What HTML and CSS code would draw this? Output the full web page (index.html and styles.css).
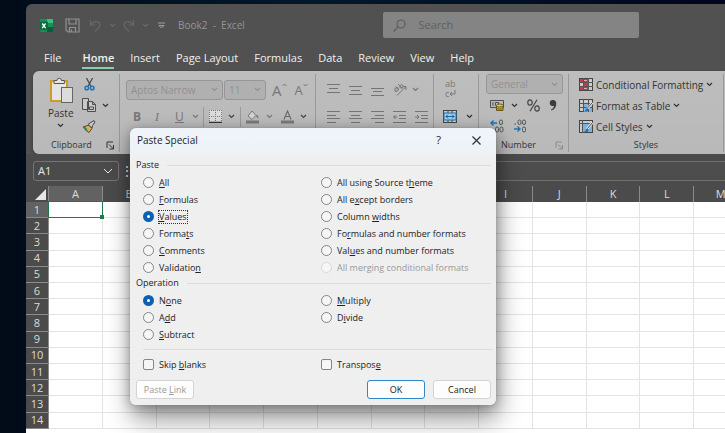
FILE: index.html
```html
<!DOCTYPE html>
<html lang="en">
<head>
<meta charset="utf-8">
<title>Book2 - Excel</title>
<link rel="stylesheet" href="styles.css">
</head>
<body>
<svg class="defs" aria-hidden="true">
  <symbol id="chev" viewBox="0 0 7 5"><path d="M1 1l2.500 2.500L6 1" fill="none" stroke="currentColor" stroke-width="1.200"/></symbol>
  <symbol id="launch" viewBox="0 0 9 9"><path d="M1 7V1h6M3 3.500l4 4M7.500 4v4h-4" fill="none" stroke="currentColor"/></symbol>
</svg>
<div class="window">
  <header class="titlebar">
    <svg class="logo" viewBox="0 0 13 13"><rect width="13" height="13" rx="1" fill="#159057"/><path d="M7 0h5a1 1 0 0 1 1 1v3H7z" fill="#3dbf82"/><path d="M7 8h6v4a1 1 0 0 1-1 1H7z" fill="#0c5a36"/><rect y="2.500" width="8" height="8.500" rx="1" fill="#0e6b3d"/><path d="M2.200 4.500l3.400 4.700M5.600 4.500L2.200 9.200" stroke="#fff" stroke-width="1.300"/></svg>
    <button class="qat" aria-label="Save"><svg width="15" height="15" viewBox="0 0 15 15" fill="none" stroke="#929292" stroke-width="1.200"><path d="M1 1h13v13H3L1 12zM4 1v5h7V1M4.500 14V9.500h6V14M6.500 11.500V14"/></svg></button>
    <button class="qat dim" aria-label="Undo"><svg width="13" height="13" viewBox="0 0 13 13" fill="none" stroke="#686868" stroke-width="1.200"><path d="M1.500 1v5h5M2 5.500C5 1 11 2 11 6c0 2-2 3.500-5 6.500"/></svg><svg class="chev"><use href="#chev"/></svg></button>
    <button class="qat dim" aria-label="Redo"><svg width="13" height="13" viewBox="0 0 13 13" fill="none" stroke="#686868" stroke-width="1.200"><path d="M11.500 1v5h-5M11 5.500C8 1 2 2 2 6c0 2 2 3.500 5 6.500"/></svg><svg class="chev"><use href="#chev"/></svg></button>
    <button class="qat more" aria-label="Customize toolbar"><svg width="7" height="7" viewBox="0 0 7 7" fill="none" stroke="#a0a0a0"><path d="M0 1h7M1 3.500h5L3.500 6z"/></svg></button>
    <span class="doc">Book2&nbsp; -&nbsp; Excel</span>
    <label class="search"><svg width="13" height="13" viewBox="0 0 13 13" fill="none" stroke="#5e5e5e" stroke-width="1.200"><circle cx="8" cy="5" r="4"/><path d="M5 8l-4.500 4.500"/></svg><input type="text" placeholder="Search" aria-label="Search"></label>
  </header>
  <nav class="tabs">
    <a href="#">File</a><a href="#" class="on">Home</a><a href="#">Insert</a><a href="#">Page Layout</a><a href="#">Formulas</a><a href="#">Data</a><a href="#">Review</a><a href="#">View</a><a href="#">Help</a>
  </nav>
  <section class="ribbon">
    <div class="group clipboard">
      <div class="body">
        <button class="paste"><svg width="24" height="27" viewBox="0 0 24 27"><rect x="2" y="4" width="16" height="20" fill="#e4e4e4" stroke="#d09a2a" stroke-width="2"/><path d="M5 6.500V3.500h3a2.200 2.200 0 0 1 4.400 0h3v3z" fill="#e6e6e6" stroke="#555"/><rect x="12.500" y="10.500" width="11" height="15" fill="#dcdcdc" stroke="#666"/></svg><span>Paste</span><svg class="chev"><use href="#chev"/></svg></button>
        <div class="stack">
          <button aria-label="Cut"><svg width="11" height="14" viewBox="0 0 11 14" fill="none"><path d="M2.500 1l4.500 8.500M8.500 1L4 9.500" stroke="#444" stroke-width="1.200"/><circle cx="2.800" cy="11" r="1.800" stroke="#2273b5" stroke-width="1.500"/><circle cx="8.200" cy="11" r="1.800" stroke="#2273b5" stroke-width="1.500"/></svg></button>
          <button aria-label="Copy"><svg width="14" height="14" viewBox="0 0 14 14" fill="#c9c9c9" stroke="#4e4e4e"><path d="M.500 .500h6v11h-6zM5.500 3.500h5l3 3v7h-8zM10.500 3.500v3h3M7.500 9h4v2.500h-4z"/></svg><svg class="chev"><use href="#chev"/></svg></button>
          <button aria-label="Format Painter"><svg width="14" height="13" viewBox="0 0 14 13"><path d="M1 7l6-2 3 3.500L7 12.500 4.500 11z" fill="#d9b346" stroke="#4c4c4c"/><path d="M1 7l3 1 1.500 3.500" fill="#3c874d" stroke="#3c874d"/><path d="M6 4.500l2-1.500 4-2.500 1 1.500-2.500 3.500L10 8z" fill="#c9c9c9" stroke="#444"/></svg></button>
        </div>
      </div>
      <div class="caption">Clipboard<svg class="launch"><use href="#launch"/></svg></div>
    </div>
    <div class="group font">
      <div class="line one">
        <button class="combo name" disabled>Aptos Narrow<svg class="chev"><use href="#chev"/></svg></button>
        <button class="combo size" disabled>11<svg class="chev"><use href="#chev"/></svg></button>
        <button class="grow" aria-label="Increase font size">A<svg width="5" height="4" viewBox="0 0 5 4"><path d="M.500 3l2-2 2 2" fill="none" stroke="currentColor"/></svg></button>
        <button class="grow small" aria-label="Decrease font size">A<svg width="5" height="4" viewBox="0 0 5 4"><path d="M.500 1l2 2 2-2" fill="none" stroke="currentColor"/></svg></button>
      </div>
      <div class="line two">
        <button class="bold">B</button><button class="ital">I</button><button class="under">U<svg class="chev"><use href="#chev"/></svg></button>
        <button class="ruled dark" aria-label="Borders"><svg width="13" height="13" viewBox="0 0 13 13"><rect width="13" height="13" fill="#dcdcdc"/><path d="M.500 0v12M12.500 0v12M6.500 0v12M0 .500h13M0 6.500h13" stroke="#777" stroke-dasharray="1 1"/><path d="M0 12.500h13" stroke="#333" stroke-width="1.400"/></svg><svg class="chev"><use href="#chev"/></svg></button>
        <button class="ruled" aria-label="Fill color"><svg width="14" height="14" viewBox="0 0 14 14"><path d="M6 1l4 4.500-4 4-4-3.500z" fill="#d3d3d3" stroke="#777"/><path d="M10.500 5l1.500 3" stroke="#777" stroke-width="1.500"/><path d="M0 12h13" stroke="#7a7a7a" stroke-width="3"/></svg><svg class="chev"><use href="#chev"/></svg></button>
        <button class="color" aria-label="Font color"><svg width="14" height="14" viewBox="0 0 14 14"><path d="M3 9.500L6.500 1 10 9.500M4.200 6.500h4.600" fill="none" stroke="#6b6b6b" stroke-width="1.200"/><path d="M0 12h13" stroke="#7a7a7a" stroke-width="3"/></svg><svg class="chev"><use href="#chev"/></svg></button>
      </div>
    </div>
    <div class="group align">
      <div class="left">
        <div class="line one">
          <svg class="bars" viewBox="0 0 13 13"><path d="M0 1.500h13M2 5.500h9M0 9.500h13"/></svg>
          <svg class="bars" viewBox="0 0 13 13"><path d="M0 3.500h13M2 7.500h9M0 11.500h13"/></svg>
          <svg class="bars" viewBox="0 0 13 13"><path d="M0 5.500h13M2 8.500h9M0 12.500h13"/></svg>
          <button class="orient" aria-label="Orientation"><svg width="15" height="14" viewBox="0 0 15 14" fill="none" stroke="#777"><ellipse cx="3.500" cy="6.500" rx="2" ry="1.500" transform="rotate(-45 3.500 6.500)"/><path d="M2.500 3.500l3.500 3.500M5 1l4 4"/><circle cx="8.500" cy="3.500" r="1.700"/><path d="M4 12.500l8.500-8.500M9.500 3.500h3.500V7"/></svg><svg class="chev"><use href="#chev"/></svg></button>
        </div>
        <div class="line two">
          <svg class="bars" viewBox="0 0 13 13"><path d="M0 1.500h13M0 5.500h9M0 8.500h13M0 12.500h9"/></svg>
          <svg class="bars" viewBox="0 0 13 13"><path d="M0 1.500h13M2 5.500h9M0 8.500h13M2 12.500h9"/></svg>
          <svg class="bars" viewBox="0 0 13 13"><path d="M0 1.500h13M4 5.500h9M0 8.500h13M4 12.500h9"/></svg>
          <svg class="bars" viewBox="0 0 13 13"><path d="M0 1.500h13M6 5.500h7M6 8.500h7M0 12.500h13M4.500 7h-4M2.500 5L.500 7l2 2"/></svg>
          <svg class="bars" viewBox="0 0 13 13"><path d="M0 1.500h13M6 5.500h7M6 8.500h7M0 12.500h13M0 7h4M2 5l2 2-2 2"/></svg>
        </div>
      </div>
      <div class="wrap">
        <button class="wraptext" aria-label="Wrap Text"><span>ab</span><span>c<svg width="7" height="8" viewBox="0 0 7 8"><path d="M6 1v4H1M3 3L1 5l2 2" fill="none" stroke="currentColor"/></svg></span></button>
        <button class="merge" aria-label="Merge and Center"><svg width="14" height="13" viewBox="0 0 14 13"><rect x=".500" y=".500" width="13" height="12" fill="#ccc" stroke="#444"/><path d="M5 0v3M9 0v3M5 10v3M9 10v3" stroke="#444"/><rect x="1" y="3" width="12" height="7" fill="#a9cde8" stroke="#1d6fae"/><path d="M3 6.500h8M5 4.500l-2 2 2 2M9 4.500l2 2-2 2" fill="none" stroke="#135f9b"/></svg><svg class="chev"><use href="#chev"/></svg></button>
      </div>
    </div>
    <div class="group number">
      <div class="body">
        <button class="combo" disabled>General<svg class="chev"><use href="#chev"/></svg></button>
        <div class="row"><button aria-label="Accounting format"><svg width="15" height="13" viewBox="0 0 15 13"><path d="M.500 1.500h13v7H.500zM3 3v4M5.500 3.500h3v3h-3z" fill="none" stroke="#4d4d4d"/><path d="M6.500 6.500h6.500v5H6.500z" fill="#d4b42f" stroke="#65581a"/><ellipse cx="9.800" cy="6.500" rx="3.300" ry="1.500" fill="#e3cb5c" stroke="#65581a"/><path d="M6.500 9c1 1.500 5.500 1.500 6.500 0" fill="none" stroke="#65581a"/></svg><svg class="chev"><use href="#chev"/></svg></button><button aria-label="Percent style"><svg width="13" height="13" viewBox="0 0 13 13" fill="none" stroke="#454545" stroke-width="1.200"><ellipse cx="3" cy="3.500" rx="2.200" ry="2.700"/><ellipse cx="10" cy="9.500" rx="2.200" ry="2.700"/><path d="M10 .800L3 12.200"/></svg></button><button aria-label="Comma style"><svg width="8" height="12" viewBox="0 0 8 12"><path d="M4 1a3 3 0 0 0-.500 6c.500 0 1 0 1.500-.300C5 8.500 3.500 10 2 10.500l.500 1C5.500 10.500 7.300 8 7.300 4.500 7.300 2.500 6 1 4 1z" fill="#3c3c3c"/></svg></button></div>
        <div class="row dec"><button aria-label="Increase decimal"><svg width="14" height="14" viewBox="0 0 14 14" fill="none" stroke="#555"><path d="M1 4h6M3.500 1.500L1 4l2.500 2.500" stroke="#1d74b5" stroke-width="1.400"/><rect x="9.500" y="1" width="3" height="4.500" rx="1.500"/><rect x="5.500" y="8" width="3" height="5" rx="1.500"/><rect x="10" y="8" width="3" height="5" rx="1.500"/></svg></button><button aria-label="Decrease decimal"><svg width="14" height="14" viewBox="0 0 14 14" fill="none" stroke="#555"><path d="M1 10h6M4.500 7.500L7 10l-2.500 2.500" stroke="#1d74b5" stroke-width="1.400"/><rect x="5" y="1" width="3" height="4.500" rx="1.500"/><rect x="9.500" y="1" width="3" height="4.500" rx="1.500"/><rect x="9.500" y="8" width="3" height="5" rx="1.500"/><path d="M1.500 5h1.500"/></svg></button></div>
      </div>
      <div class="caption">Number<svg class="launch dim"><use href="#launch"/></svg></div>
    </div>
    <div class="group styles">
      <div class="body">
        <button><svg class="ico" viewBox="0 0 14 13"><rect x=".500" y=".500" width="13" height="12" fill="#ccc" stroke="#444"/><path d="M1 1h8v3H1zM5 5h5v3H5zM1 9h8v3H1z" fill="#c03c4b"/><path d="M0 4.500h14M0 8.500h14M4.500 0v13M9.500 0v13" stroke="#555"/><path d="M5 2.500h3M5 10.500h3" stroke="#e9a3aa"/></svg>Conditional Formatting<svg class="chev"><use href="#chev"/></svg></button>
        <button><svg class="ico" viewBox="0 0 14 13"><rect x=".500" y=".500" width="13" height="12" fill="#ccc" stroke="#444"/><path d="M5 5h8v8H5z" fill="#7db2dc"/><path d="M0 4.500h14M0 8.500h14M4.500 0v13M9.500 0v13" stroke="#555"/><path d="M13.500 3.500L8 10" stroke="#eee" stroke-width="2.500"/><path d="M13.500 3.500L8.500 9" stroke="#444"/><path d="M8.500 9c-2 0-1 2.500-3.500 3.500 3 .500 5-.500 4.500-2.500z" fill="#1d74b5"/></svg>Format as Table<svg class="chev"><use href="#chev"/></svg></button>
        <button><svg class="ico" viewBox="0 0 14 13"><rect x=".500" y=".500" width="13" height="12" fill="#ccc" stroke="#444"/><path d="M3 3h10v9H3z" fill="#7db2dc"/><path d="M0 3.500h14M3.500 0v13" stroke="#555"/><path d="M13.500 2.500L8 9" stroke="#eee" stroke-width="2.500"/><path d="M13.500 2.500L8.500 8.500" stroke="#444"/><path d="M8.500 8.500c-2 0-1 2.500-3.500 3.500 3 .500 5-.500 4.500-2.500z" fill="#1d74b5"/></svg>Cell Styles<svg class="chev"><use href="#chev"/></svg></button>
      </div>
      <div class="caption">Styles</div>
    </div>
  </section>
  <div class="formula">
    <button class="namebox">A1<svg width="10" height="6" viewBox="0 0 10 6"><path d="M1 1l4 4 4-4" fill="none" stroke="currentColor"/></svg></button>
    <span class="grip">⋮</span>
    <input type="text" aria-label="Formula bar">
  </div>
  <main class="sheet">
    <table>
      <thead><tr><th class="corner"><svg width="11" height="11" viewBox="0 0 11 11"><path d="M11 0v11H0z" fill="#e6e6e6"/></svg></th><th class="sel">A</th><th>B</th><th></th><th></th><th></th><th></th><th></th><th></th><th>I</th><th>J</th><th>K</th><th>L</th><th>M</th></tr></thead>
      <tbody>
        <tr><th class="sel">1</th><td class="active"></td><td></td><td></td><td></td><td></td><td></td><td></td><td></td><td></td><td></td><td></td><td></td><td></td></tr>
        <tr><th>2</th><td></td><td></td><td></td><td></td><td></td><td></td><td></td><td></td><td></td><td></td><td></td><td></td><td></td></tr>
        <tr><th>3</th><td></td><td></td><td></td><td></td><td></td><td></td><td></td><td></td><td></td><td></td><td></td><td></td><td></td></tr>
        <tr><th>4</th><td></td><td></td><td></td><td></td><td></td><td></td><td></td><td></td><td></td><td></td><td></td><td></td><td></td></tr>
        <tr><th>5</th><td></td><td></td><td></td><td></td><td></td><td></td><td></td><td></td><td></td><td></td><td></td><td></td><td></td></tr>
        <tr><th>6</th><td></td><td></td><td></td><td></td><td></td><td></td><td></td><td></td><td></td><td></td><td></td><td></td><td></td></tr>
        <tr><th>7</th><td></td><td></td><td></td><td></td><td></td><td></td><td></td><td></td><td></td><td></td><td></td><td></td><td></td></tr>
        <tr><th>8</th><td></td><td></td><td></td><td></td><td></td><td></td><td></td><td></td><td></td><td></td><td></td><td></td><td></td></tr>
        <tr><th>9</th><td></td><td></td><td></td><td></td><td></td><td></td><td></td><td></td><td></td><td></td><td></td><td></td><td></td></tr>
        <tr><th>10</th><td></td><td></td><td></td><td></td><td></td><td></td><td></td><td></td><td></td><td></td><td></td><td></td><td></td></tr>
        <tr><th>11</th><td></td><td></td><td></td><td></td><td></td><td></td><td></td><td></td><td></td><td></td><td></td><td></td><td></td></tr>
        <tr><th>12</th><td></td><td></td><td></td><td></td><td></td><td></td><td></td><td></td><td></td><td></td><td></td><td></td><td></td></tr>
        <tr><th>13</th><td></td><td></td><td></td><td></td><td></td><td></td><td></td><td></td><td></td><td></td><td></td><td></td><td></td></tr>
        <tr><th>14</th><td></td><td></td><td></td><td></td><td></td><td></td><td></td><td></td><td></td><td></td><td></td><td></td><td></td></tr>
      </tbody>
    </table>
  </main>
</div>

<form class="dialog" role="dialog" aria-label="Paste Special">
  <div class="dhead"><span>Paste Special</span><button type="button" class="help" aria-label="Help">?</button><button type="button" class="close" aria-label="Close"><svg width="9" height="9" viewBox="0 0 9 9"><path d="M.500 .500l8 8M8.500 .500l-8 8" stroke="#333" stroke-width="1.200"/></svg></button></div>
  <fieldset>
    <legend>Paste</legend>
    <div class="opts six">
      <label><input type="radio" name="p"><span><u>A</u>ll</span></label>
      <label><input type="radio" name="p"><span><u>F</u>ormulas</span></label>
      <label><input type="radio" name="p" checked><span class="focus"><u>V</u>alues</span></label>
      <label><input type="radio" name="p"><span>Forma<u>t</u>s</span></label>
      <label><input type="radio" name="p"><span><u>C</u>omments</span></label>
      <label><input type="radio" name="p"><span>Validatio<u>n</u></span></label>
      <label><input type="radio" name="p"><span>All using Source t<u>h</u>eme</span></label>
      <label><input type="radio" name="p"><span>All e<u>x</u>cept borders</span></label>
      <label><input type="radio" name="p"><span>Column <u>w</u>idths</span></label>
      <label><input type="radio" name="p"><span>Fo<u>r</u>mulas and number formats</span></label>
      <label><input type="radio" name="p"><span>Val<u>u</u>es and number formats</span></label>
      <label class="off"><input type="radio" name="p" disabled><span>All mer<u>g</u>ing conditional formats</span></label>
    </div>
  </fieldset>
  <fieldset>
    <legend>Operation</legend>
    <div class="opts three">
      <label><input type="radio" name="o" checked><span>N<u>o</u>ne</span></label>
      <label><input type="radio" name="o"><span>A<u>d</u>d</span></label>
      <label><input type="radio" name="o"><span><u>S</u>ubtract</span></label>
      <label><input type="radio" name="o"><span><u>M</u>ultiply</span></label>
      <label><input type="radio" name="o"><span>D<u>i</u>vide</span></label>
    </div>
  </fieldset>
  <div class="opts checks">
    <label><input type="checkbox"><span>Skip <u>b</u>lanks</span></label>
    <label><input type="checkbox"><span>Transpos<u>e</u></span></label>
  </div>
  <div class="actions"><button type="button" class="link" disabled>Paste <u>L</u>ink</button><button type="button" class="ok">OK</button><button type="button">Cancel</button></div>
</form>
</body>
</html>
```
FILE: styles.css
```css
* { box-sizing: border-box; }
body {
  margin: 0;
  height: 100vh;
  padding: 4px 0 0 26px;
  overflow: hidden;
  position: relative;
  background: linear-gradient(90deg, #020b18, #00182c 45%, #020420);
  font-family: "Open Sans", "Noto Sans", sans-serif;
  font-size: 10px;
  line-height: 14px;
  color: #333;
}
button, input { font: inherit; color: inherit; }
button { border: 0; padding: 0; background: none; display: flex; align-items: center; flex: none; }
svg { display: block; flex: none; }
.defs { position: absolute; width: 0; height: 0; }
.chev { width: 7px; height: 5px; }
.launch { width: 9px; height: 9px; }

.window {
  height: 100%;
  display: flex;
  flex-direction: column;
  background: #515151;
  border-top-left-radius: 6px;
  overflow: hidden;
}

.titlebar { height: 42px; flex: none; display: flex; align-items: center; padding-left: 14px; position: relative; }
.logo { width: 13px; height: 13px; margin-right: 12px; }
.qat { gap: 7px; color: #686868; margin-right: 9px; }
.qat.dim { margin-right: 6px; }
.qat.more { margin: 0 13px 0 3px; }
.doc { color: #949494; white-space: nowrap; }
.search {
  position: absolute;
  left: calc(51% + 1px);
  width: 256px;
  height: 26px;
  display: flex;
  align-items: center;
  gap: 12px;
  padding-left: 10px;
  background: #848484;
  border-radius: 2px;
}
.search input { flex: 1; min-width: 0; border: 0; padding: 0; background: none; font-size: 11px; }
.search input::placeholder { color: #5f5f5f; opacity: 1; }

.tabs { height: 25px; flex: none; display: flex; gap: 16px; padding-left: 18px; font-size: 11px; line-height: 20px; }
.tabs a { color: #f0f0f0; text-decoration: none; height: 23px; white-space: nowrap; padding-top: 2px; }
.tabs a:first-child { margin-right: 5px; }
.tabs .on { font-weight: 600; border-bottom: 2px solid #8ccdb0; }

.ribbon {
  height: 83px;
  flex: none;
  margin-left: 7px;
  display: flex;
  background: linear-gradient(#bdbdbd, #b9b9b9);
  border-radius: 6px 0 0 6px;
  box-shadow: 0 1px 3px #333;
}
.group { flex: none; position: relative; border-right: 1px solid #999; display: flex; flex-direction: column; margin: 3px 0 2px; }
.caption { display: flex; justify-content: center; align-items: center; margin-top: auto; font-size: 9px; }
.combo { height: 20px; padding: 0 4px; justify-content: space-between; border: 1px solid #969696; border-radius: 3px; background: #b0b0b0; color: #909090; white-space: nowrap; }
.line { display: flex; align-items: center; height: 27px; }
.line.one { margin-top: 2px; }

.clipboard { width: 87px; }
.clipboard .body { display: flex; padding: 3px 0 0 15px; gap: 8px; }
.paste { flex-direction: column; gap: 2px; height: 52px; }
.paste .chev { margin-top: 1px; }
.stack { display: flex; flex-direction: column; gap: 7px; }
.stack button { gap: 6px; height: 14px; }
.stack button:first-child { padding-left: 2px; }
.clipboard .caption { justify-content: space-between; padding: 0 4px 0 18px; }

.font { width: 196px; padding-left: 6px; color: #777; }
.font .name { width: 97px; margin-right: 1px; }
.font .size { width: 42px; margin-right: 6px; }
.grow { font-size: 15px; align-items: flex-start; margin-right: 8px; }
.grow.small { font-size: 13px; }
.font .two { padding-left: 7px; font-size: 12px; }
.bold { font-weight: 700; width: 22px; }
.ital { font-style: italic; font-family: "Liberation Serif", serif; width: 20px; }
.under { text-decoration: underline; gap: 8px; margin-right: 4px; }
.ruled { gap: 6px; border-left: 1px solid #9a9a9a; padding-left: 5px; height: 20px; margin-right: 5px; }
.color { gap: 5px; margin-left: 3px; }
.ruled.dark .chev, .color .chev { color: #444; }

.align { width: 163px; flex-direction: row; color: #777; }
.left { width: 118px; border-right: 1px solid #999; padding-left: 11px; }
.left .line { gap: 9px; }
.bars { width: 13px; height: 13px; fill: none; stroke: #747474; }
.orient { gap: 4px; }
.wrap { padding: 5px 0 0 9px; }
.wraptext { flex-direction: column; align-items: flex-start; font-size: 9px; line-height: 10px; height: 20px; padding-left: 2px; }
.wraptext span { display: flex; }
.merge { gap: 9px; margin-top: 11px; color: #333; }

.number { width: 90px; }
.number .body { padding: 0 5px 0 7px; }
.number .combo { width: 77px; }
.row { display: flex; align-items: center; height: 22px; gap: 9px; padding-left: 4px; }
.row button { gap: 6px; }
.row.dec { height: 20px; }
.number .caption { padding: 0 4px 0 22px; justify-content: space-between; }
.launch.dim { color: #8b8b8b; }

.styles { width: 155px; }
.styles .body { padding: 0 0 0 10px; }
.styles .body button { height: 21px; gap: 3px; white-space: nowrap; }
.ico { width: 14px; height: 13px; }

.formula { height: 32px; flex: none; display: flex; align-items: flex-start; padding: 7px 0 5px 7px; background: #4b4b4b; color: #e8e8e8; }
.namebox { width: 86px; height: 20px; justify-content: space-between; padding: 0 5px 0 4px; border: 1px solid #757575; border-radius: 3px; font-size: 11px; }
.grip { width: 16px; text-align: center; font-size: 14px; line-height: 20px; }
.formula input { flex: 1; min-width: 0; height: 20px; padding: 0 4px; background: #4d4d4d; border: solid #707070; border-width: 1px 0; }

.sheet { flex: 1; min-height: 0; background: #fff; overflow: hidden; }
table { width: calc(100% + 23px); height: calc(100% - 4px); table-layout: fixed; border-collapse: separate; border-spacing: 0; }
th, td { padding: 0; height: 16px; border: solid #e3e3e3; border-width: 0 1px 1px 0; }
th { background: #4b4b4b; color: #dcdcdc; font-weight: 400; font-size: 11px; line-height: 14px; border-color: #8a8a8a; }
thead th { border-bottom: 0; }
th.corner { width: 23px; }
.corner svg { margin: 0 2px 0 auto; }
th.sel { background: #626262; }
.active { position: relative; }
.active::before { content: ""; position: absolute; inset: -1px; border: 1px solid #1d7a48; }
.active::after { content: ""; position: absolute; right: -2px; bottom: -2px; width: 4px; height: 4px; background: #1d7a48; }

.dialog {
  position: absolute;
  left: 130px;
  top: 128px;
  width: 366px;
  padding-bottom: 6px;
  background: linear-gradient(#eff4fa, #eef3f8 20px, #efefef 32px);
  border-radius: 6px;
  box-shadow: 0 0 1px #777, 2px 14px 26px rgba(0, 0, 0, .42), 0 2px 12px rgba(0, 0, 0, .28);
  font-size: 9px;
  color: #222;
}
.dhead { display: flex; align-items: center; height: 24px; margin-bottom: 6px; padding: 0 15px 0 7px; font-size: 10px; }
.help { margin-left: auto; margin-right: 31px; font-size: 11px; }
fieldset { border: 0; margin: 0; padding: 0 5px 0 6px; min-width: 0; }
legend { width: 100%; padding: 0; display: flex; align-items: center; gap: 8px; height: 14px; margin-bottom: 2px; }
legend::after { content: ""; flex: 1; height: 1px; background: #dcdcdc; }
.opts { display: grid; grid-auto-flow: column; grid-template-columns: 178px 1fr; grid-auto-rows: 17px; padding-left: 7px; }
.six { grid-template-rows: repeat(6, 17px); }
.three { grid-template-rows: repeat(3, 17px); }
.opts label { display: flex; align-items: center; gap: 5px; white-space: nowrap; }
.opts span { line-height: 12px; }
.opts input { appearance: none; margin: 0; width: 11px; height: 11px; flex: none; border: 1px solid #858585; border-radius: 50%; background: #f6f6f6; }
.opts input:checked { border: 4px solid #0b60b4; background: #fff; }
.opts input[type="checkbox"] { border-radius: 2px; }
.opts input:disabled { border-color: #d8d8d8; }
.off { color: #999; }
.focus { outline: 1px dotted #333; }
.checks { margin: 6px 3px 0 13px; padding: 6px 0 0; border-top: 1px solid #dcdcdc; }
.actions { display: flex; gap: 8px; padding: 7px 5px 0 6px; }
.actions button { width: 58px; height: 19px; justify-content: center; background: #fdfdfd; border: 1px solid #d4d4d4; border-radius: 3px; white-space: pre; }
.actions .link { margin-right: auto; color: #999; }
.actions .ok { border-color: #2f86c9; }
```
